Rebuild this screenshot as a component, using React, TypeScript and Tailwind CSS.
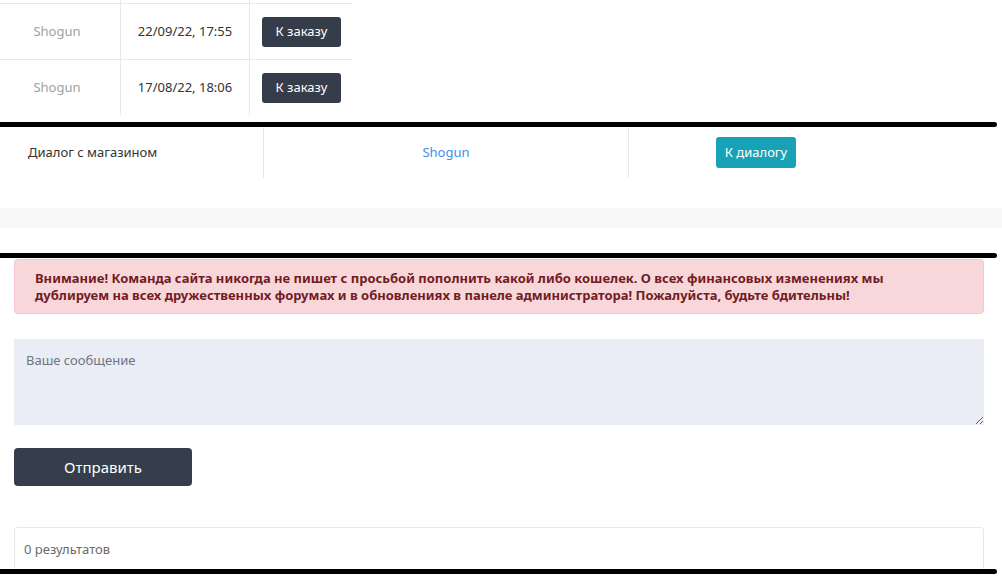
const font = "font-['Noto_Sans',_'DejaVu_Sans',_sans-serif]";

type OrderRow = { shop: string; date: string };

const orders: OrderRow[] = [
  { shop: "Shogun", date: "22/09/22, 17:55" },
  { shop: "Shogun", date: "17/08/22, 18:06" },
];

function Rule() {
  return <div className="h-[5px] w-[997px] bg-black rounded-r-full" />;
}

export default function App() {
  return (
    <div className={`${font} w-[1002px] h-[582px] overflow-hidden bg-white text-[13px] text-[#333]`}>
      {/* orders table */}
      <div className="h-[122px]">
        <div className="w-[352px] flex h-[3px]">
          <div className="w-[121px] border-r border-[#e8e8e8]" />
          <div className="w-[129px] border-r border-[#e8e8e8]" />
        </div>
        {orders.map((o, i) => (
          <div key={i} className="w-[352px] flex h-[56px] border-t border-[#e8e8e8]">
            <div className="w-[121px] border-r border-[#e8e8e8] flex items-center justify-center pr-[6px] text-[#a0a0a0]">
              {o.shop}
            </div>
            <div className="w-[129px] border-r border-[#e8e8e8] flex items-center justify-center text-[#333]">
              {o.date}
            </div>
            <div className="flex-1 flex items-center pl-[12px]">
              <button className="h-[30px] w-[79px] rounded-[3px] bg-[#353c4a] text-white text-[13px]">
                К заказу
              </button>
            </div>
          </div>
        ))}
      </div>
      <Rule />

      {/* dialog with shop */}
      <div className="flex h-[51px]">
        <div className="w-[264px] border-r border-[#e8e8e8] flex items-center pl-[28px]">
          Диалог с магазином
        </div>
        <div className="w-[365px] border-r border-[#e8e8e8] flex items-center justify-center text-[#3d8fe8]">
          Shogun
        </div>
        <div className="w-[254px] flex items-center justify-center">
          <button className="h-[31px] px-[9px] rounded-[3px] bg-[#17a2b8] text-white text-[13px]">
            К диалогу
          </button>
        </div>
      </div>
      <div className="h-[30px]" />
      <div className="h-[20px] bg-[#f8f8f8]" />
      <div className="h-[25px]" />
      <Rule />

      {/* message form */}
      <div className="pl-[14px] pr-[18px] pt-[1px]">
        <div className="rounded-[4px] border border-[#f5c6cb] bg-[#f8d7da] pl-[20px] pr-[20px] pt-[10px] pb-[9px] text-[13px] leading-[17px] font-bold text-[#721c24]">
          Внимание! Команда сайта никогда не пишет с просьбой пополнить какой либо кошелек. О всех финансовых изменениях мы
          <br />
          дублируем на всех дружественных форумах и в обновлениях в панеле администратора! Пожалуйста, будьте бдительны!
        </div>
        <textarea
          placeholder="Ваше сообщение"
          className="mt-[25px] block w-full h-[86px] bg-[#eaedf6] px-[12px] py-[12px] text-[13px] text-[#333] placeholder:text-[#6f7580] outline-none"
        />
        <button className="mt-[23px] block w-[178px] h-[38px] rounded-[4px] bg-[#363e4c] text-white text-[15px]">
          Отправить
        </button>
        <div className="mt-[41px] h-[42px] rounded-t-[4px] border border-b-0 border-[#e8e8e8] pl-[9px] pt-[12px] text-[13px] text-[#6b6b6b]">
          0 результатов
        </div>
      </div>
      <Rule />
    </div>
  );
}
